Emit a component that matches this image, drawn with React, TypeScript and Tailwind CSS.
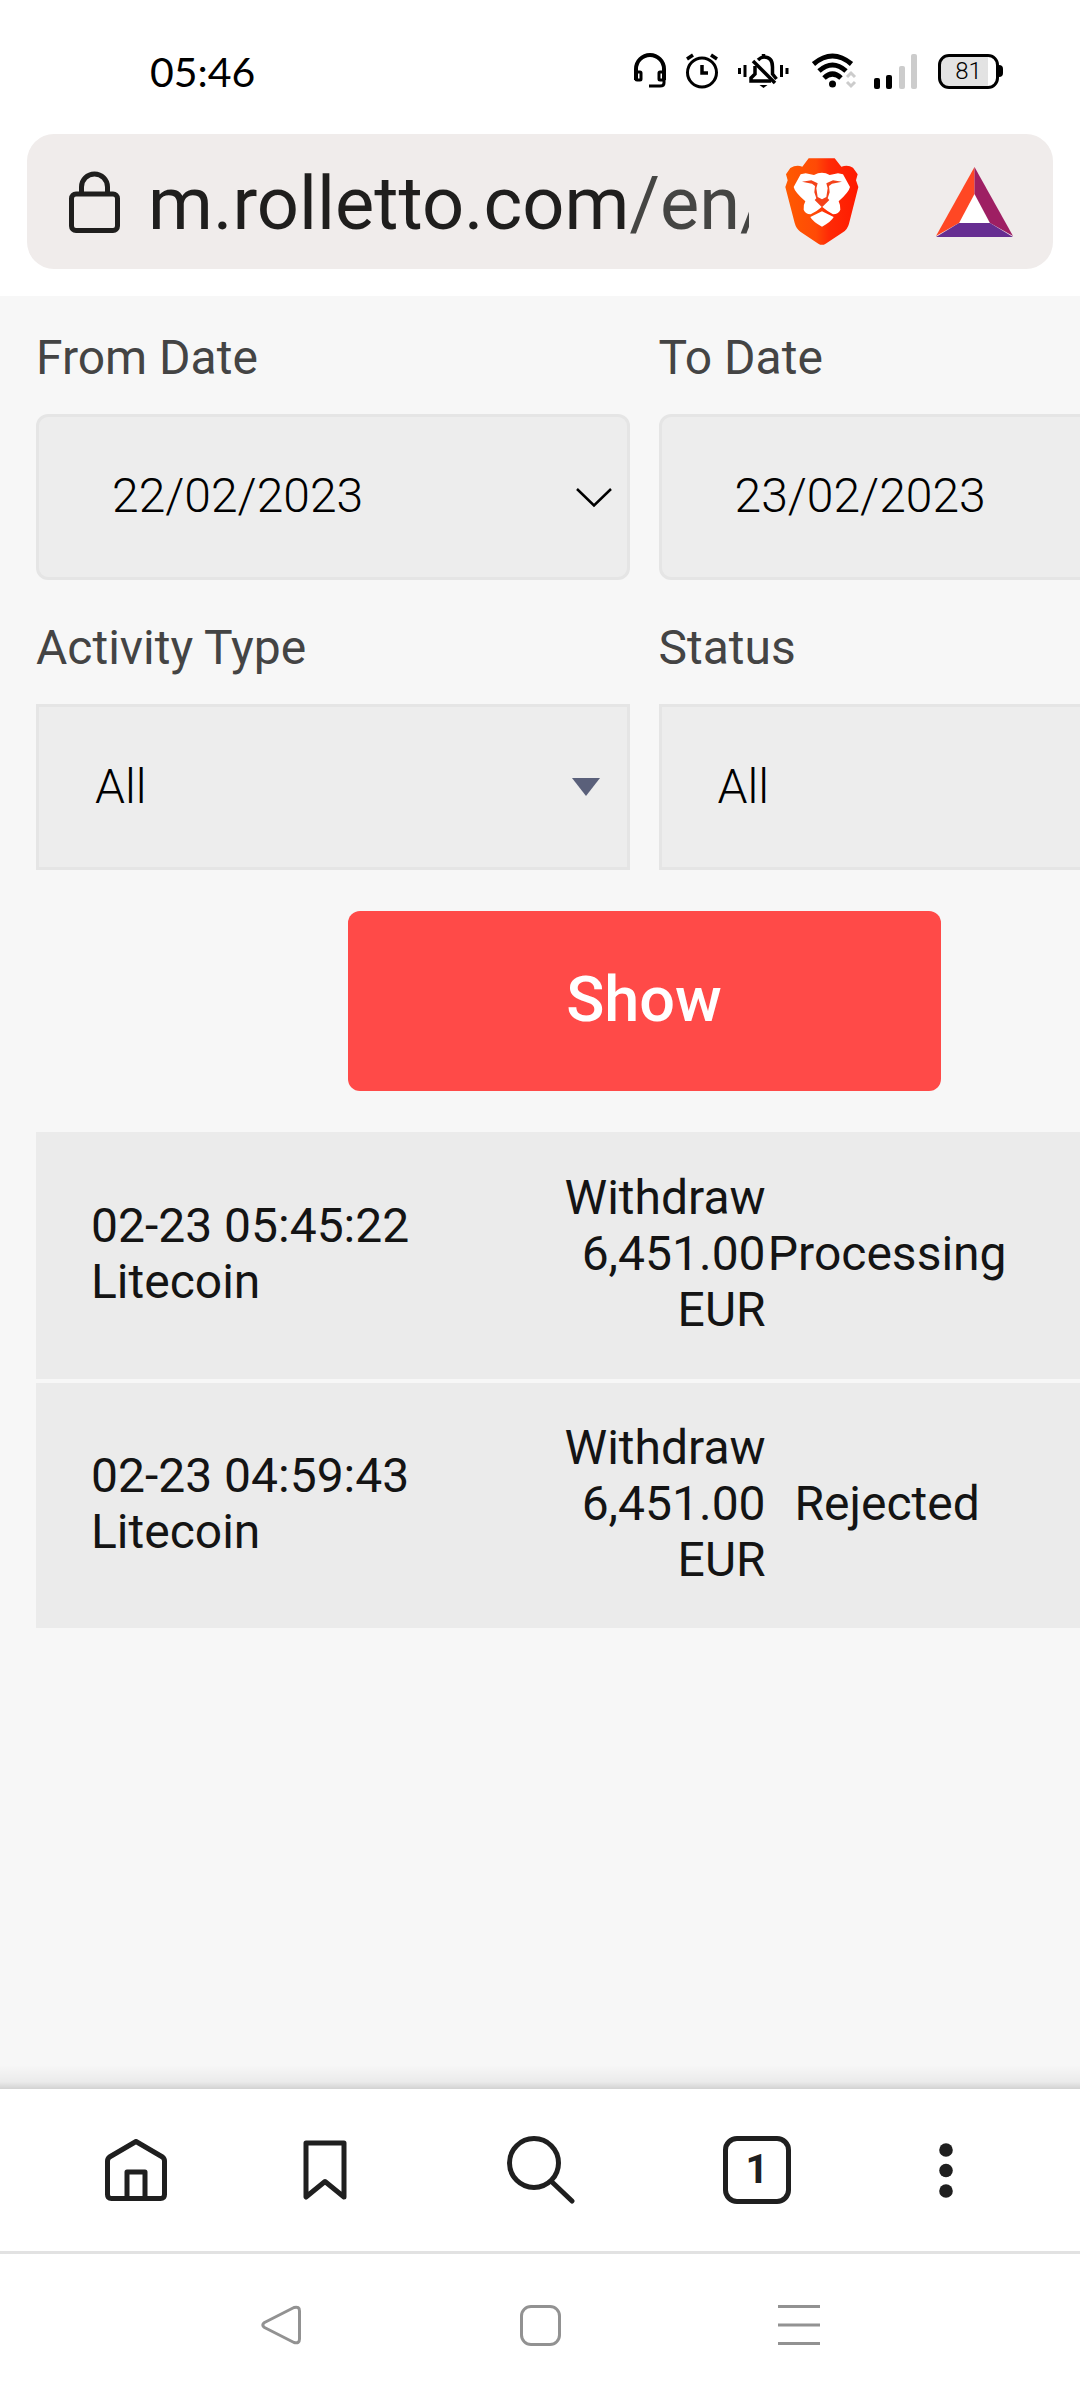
import { useState } from "react"

interface Activity {
  date: string
  method: string
  type: string
  amount: string
  status: string
}

const activities: Activity[] = [
  { date: "02-23 05:45:22", method: "Litecoin", type: "Withdraw", amount: "6,451.00 EUR", status: "Processing" },
  { date: "02-23 04:59:43", method: "Litecoin", type: "Withdraw", amount: "6,451.00 EUR", status: "Rejected" },
]

function StatusBar() {
  return (
    <div className="flex h-[134px] items-center justify-between pt-2 pr-[77px] pl-[150px]">
      <span className="font-[Lato,sans-serif] text-[41px] leading-none text-black">05:46</span>
      <div className="flex items-center">
        {/* Headset */}
        <svg width="32" height="36" viewBox="0 0 32 36" fill="none" stroke="#000" strokeWidth="4" className="mr-5">
          <path d="M2 27V16a14 14 0 0 1 28 0v11" />
          <rect x="2" y="19" width="5" height="8" rx="1" strokeWidth="3" />
          <rect x="25" y="19" width="5" height="8" rx="1" strokeWidth="3" />
          <path d="M30 26v4q0 3-4 3H15" strokeWidth="3" />
        </svg>
        {/* Alarm */}
        <svg width="32" height="36" viewBox="0 0 32 36" fill="none" stroke="#000" strokeWidth="3" className="mr-5">
          <circle cx="16" cy="19.500" r="14.500" />
          <path d="M16 12v8h6" strokeWidth="3.500" />
          <path d="M1 6l6-4M31 6l-6-4" strokeWidth="3.500" />
        </svg>
        {/* Muted bell */}
        <svg width="51" height="36" viewBox="0 0 51 36" fill="none" stroke="#000" strokeWidth="3.500" className="mr-[23px]">
          <path d="M1.500 15v6M7 12v12M43.500 12v12M49 15v6" strokeWidth="3" />
          <path d="M20 7q3-3 6-3 8.500 0 8.500 10v7l4 5M17 13v8l-4 4v3h20" />
          <path d="M15 8l22 22" />
          <path d="M25.500 4V1" />
          <path d="M21.500 32h8l-4 3z" fill="#000" stroke="none" />
        </svg>
        {/* Wi-Fi */}
        <svg width="45" height="36" viewBox="0 0 45 36" fill="none" stroke="#000" strokeWidth="5" className="mr-[17px]">
          <path d="M1.500 11Q20.500-5 39.500 11" />
          <path d="M7 18Q20.500 6 34 18" />
          <path d="M12 25Q20.500 17 29 25" />
          <circle cx="20.500" cy="31" r="3.500" fill="#000" stroke="none" />
          <path d="M35 24l4-4 4 4M35 29l4 4 4-4" stroke="#ccc" strokeWidth="3" />
        </svg>
        {/* Signal */}
        <svg width="44" height="36" viewBox="0 0 44 36" className="mr-5">
          <rect x="0" y="25" width="6" height="11" rx="2" fill="#000" />
          <rect x="12" y="22" width="6" height="14" rx="2" fill="#000" />
          <rect x="25" y="13" width="6" height="23" rx="2" fill="#ccc" />
          <rect x="37" y="1" width="6" height="35" rx="2" fill="#ccc" />
        </svg>
        {/* Battery */}
        <div className="flex items-center">
          <div className="flex h-[35px] w-[61px] items-center justify-center rounded-[11px] border-3 border-black bg-linear-to-r from-[#e3e3e3] from-85% to-white to-85% text-[24px] font-light leading-none text-black">
            81
          </div>
          <div className="h-3 w-1 rounded-r-sm bg-black" />
        </div>
      </div>
    </div>
  )
}

function AddressBar() {
  return (
    <div className="mx-[27px] mb-[27px] flex h-[135px] items-center rounded-[27px] bg-[#f0eceb] pr-10 pl-[42px]">
      <svg width="51" height="62" viewBox="0 0 51 62" fill="none" stroke="#1f1e1d" strokeWidth="5" className="mr-7 shrink-0">
        <rect x="2.500" y="23" width="46" height="36.500" rx="4.500" />
        <path d="M12.500 23v-7a13 13 0 0 1 26 0v7" />
      </svg>
      <div className="min-w-0 flex-1 overflow-hidden pt-1 text-[74px] leading-[100px] whitespace-nowrap text-[#1f1e1d]">
        m.rolletto.com<span className="text-[#454543]">/en/</span>
      </div>
      <button aria-label="Brave Shields" className="mr-[77px] ml-9 shrink-0">
        <svg width="74" height="87" viewBox="196 113 222 261">
          <defs>
            <linearGradient id="lion" x1="0" x2="1">
              <stop offset="0" stopColor="#ff5a00" />
              <stop offset="0.420" stopColor="#ff4a06" />
              <stop offset="0.600" stopColor="#ff2a06" />
              <stop offset="1" stopColor="#ff1a00" />
            </linearGradient>
          </defs>
          <path
            fill="url(#lion)"
            d="M267 114H345L365 139Q385 132 400 142L414 162 409 180 416 200 388 310Q384 326 370 336L318 370Q307 377 296 370L242 334Q230 326 225 308L197 200 204 180 199 162 212 143Q230 132 248 139Z"
          />
          <path
            fill="#fff"
            d="M243 162L258 159 283 164Q307 150 330 164L355 159 370 162 391 200Q388 215 357 243 363 255 362 268 358 280 340 282 325 274 307 259 290 274 273 282 256 280 252 268 250 255 257 243 225 215 222 200Z"
          />
          <path
            fill="#f4421a"
            d="M247 184L275 180 294 189 290 204 294 230 307 237 320 230 324 204 320 189 340 180 367 184 337 190 328 197 330 216 324 234 329 239 307 261 285 239 290 234 284 216 286 197 277 190Z"
          />
          <path fill="#fff" d="M307 273L342 290Q335 304 307 319 279 304 272 290Z" />
        </svg>
      </button>
      <button aria-label="Rewards" className="shrink-0">
        <svg width="77" height="70" viewBox="0 0 77 70">
          <path fill="#fff" d="M38 26L54 57H23Z" />
          <path fill="#ff4724" d="M38.500 0V27L23 56 0 69Z" />
          <path fill="#9e1f63" d="M38.500 0V27L54 56 77 69Z" />
          <path fill="#662d91" d="M0 70L23 56H54L77 70Z" />
        </svg>
      </button>
    </div>
  )
}

interface DateFieldProps {
  id: string
  label: string
  initial: string
}

function DateField({ id, label, initial }: DateFieldProps) {
  const [value, setValue] = useState(initial)

  return (
    <div>
      <label htmlFor={id} className="block pb-7 text-[48px] leading-[56px] text-[#444]">
        {label}
      </label>
      <div className="relative">
        <input
          id={id}
          type="text"
          value={value}
          onChange={(e) => setValue(e.target.value)}
          className="block h-[166px] w-full rounded-xl border-3 border-[#e5e5e5] bg-[#ededed] pb-1 pl-[73px] text-[48px] font-light text-black"
        />
        <svg width="36" height="20" viewBox="0 0 36 20" fill="none" stroke="#000" strokeWidth="2.500" className="absolute top-[74px] right-[18px]">
          <path d="M1 1L18 17.500 35 1" />
        </svg>
      </div>
    </div>
  )
}

function SelectField({ id, label }: { id: string; label: string }) {
  return (
    <div>
      <label htmlFor={id} className="block pb-7 text-[48px] leading-[56px] text-[#444]">
        {label}
      </label>
      <div className="relative">
        <select
          id={id}
          className="block h-[166px] w-full appearance-none rounded-none border-3 border-[#e5e5e5] bg-[#ededed] pl-[56px] text-[48px] font-light text-black"
        >
          <option>All</option>
        </select>
        <svg width="28" height="18" viewBox="0 0 28 18" className="pointer-events-none absolute top-[74px] right-[30px]">
          <path d="M0 0H28L14 18Z" fill="#5a607a" />
        </svg>
      </div>
    </div>
  )
}

function ActivityTable() {
  return (
    <table className="w-full table-fixed border-collapse text-[48px] leading-[56px] text-[#141414]">
      <colgroup>
        <col className="w-[43%]" />
        <col className="w-[17%]" />
        <col className="w-[20%]" />
        <col className="w-[20%]" />
      </colgroup>
      <tbody>
        {activities.map((item) => (
          <tr key={item.date} className="h-[249px] border-b-4 border-[#f7f7f7] bg-[#ebebeb]">
            <td className="pb-[3px] pl-[55px] align-middle">
              {item.date}
              <br />
              {item.method}
            </td>
            <td className="pb-[3px] text-right align-middle">
              <div>{item.type}</div>
              <div>{item.amount}</div>
            </td>
            <td className="pb-[3px] text-center align-middle">{item.status}</td>
            <td />
          </tr>
        ))}
      </tbody>
    </table>
  )
}

function Toolbar() {
  return (
    <nav className="relative flex h-[165px] items-center border-b-3 border-[#e2e2e2] bg-white pr-[53px] pl-[55px] text-[#1f1f1f]">
      {/* Shadow cast over the page */}
      <div className="absolute inset-x-0 bottom-full h-6 bg-linear-to-b from-transparent via-black/5 via-70% to-black/15" />
      <button aria-label="Home" className="flex flex-3 justify-center">
        <svg width="62" height="62" viewBox="0 0 62 62" fill="none" stroke="currentColor" strokeWidth="5" strokeLinejoin="round">
          <path d="M31 2.500L57.500 18q2 1.500 2 4v33.500q0 4-4 4h-49q-4 0-4-4V22q0-2.500 2-4Z" />
          <path d="M22 59V33H40V59" />
        </svg>
      </button>
      <button aria-label="Bookmarks" className="flex flex-4 justify-center">
        <svg width="44" height="60" viewBox="0 0 44 60" fill="none" stroke="currentColor" strokeWidth="5" strokeLinejoin="round">
          <path d="M3 3H41V57L22 41.500 3 57Z" />
        </svg>
      </button>
      <button aria-label="Search" className="flex flex-4 justify-center">
        <svg width="68" height="68" viewBox="0 0 68 68" fill="none" stroke="currentColor" strokeWidth="5" strokeLinecap="round">
          <circle cx="27" cy="27" r="24.500" />
          <path d="M45 46L65 65" />
        </svg>
      </button>
      <button aria-label="Tabs" className="flex flex-4 justify-center">
        <span className="flex size-17 items-center justify-center rounded-[14px] border-5 border-current text-[40px] font-bold leading-none">
          1
        </span>
      </button>
      <button aria-label="Menu" className="flex flex-3 justify-center">
        <svg width="14" height="55" viewBox="0 0 14 55" fill="currentColor">
          <circle cx="7" cy="7" r="6.800" />
          <circle cx="7" cy="27.500" r="6.800" />
          <circle cx="7" cy="48" r="6.800" />
        </svg>
      </button>
    </nav>
  )
}

function SystemNav() {
  return (
    <div className="flex h-[146px] items-center justify-center bg-white pb-1 text-[#929292]">
      <button aria-label="Back" className="flex w-[24%] justify-center">
        <svg width="40" height="40" viewBox="0 0 40 40" fill="none" stroke="currentColor" strokeWidth="3" strokeLinejoin="round">
          <path d="M33 2.500L3.500 17.500Q0 20 3.500 22.500L33 37.500Q38.500 39 38.500 34V6Q38.500 1 33 2.500Z" />
        </svg>
      </button>
      <button aria-label="Home screen" className="flex w-[24%] justify-center">
        <span className="size-[41px] rounded-[11px] border-3 border-current" />
      </button>
      <button aria-label="Recent apps" className="flex w-[24%] justify-center">
        <svg width="42" height="42" viewBox="0 0 42 42" stroke="currentColor" strokeWidth="3">
          <path d="M0 2.500H42M0 21H42M0 39.500H42" />
        </svg>
      </button>
    </div>
  )
}

export default function App() {
  return (
    <div className="flex min-h-screen flex-col overflow-hidden bg-white font-[Roboto,sans-serif]">
      <header>
        <StatusBar />
        <AddressBar />
      </header>

      <main className="flex-1 overflow-hidden bg-[#f7f7f7]">
        {/* The page is wider than the viewport, so the right column runs off screen */}
        <div className="w-[calc(100%+208px)] px-9 pt-[34px]">
          <form onSubmit={(e) => e.preventDefault()}>
            <div className="grid grid-cols-2 gap-x-[29px] gap-y-10">
              <DateField id="from-date" label="From Date" initial="22/02/2023" />
              <DateField id="to-date" label="To Date" initial="23/02/2023" />
              <SelectField id="activity-type" label="Activity Type" />
              <SelectField id="status" label="Status" />
            </div>
            <button
              type="submit"
              className="mx-auto my-[41px] block h-[180px] w-[593px] rounded-xl bg-[#ff4a48] pb-0.5 text-[63px] font-medium text-white"
            >
              Show
            </button>
          </form>
          <ActivityTable />
        </div>
      </main>

      <Toolbar />
      <SystemNav />
    </div>
  )
}
